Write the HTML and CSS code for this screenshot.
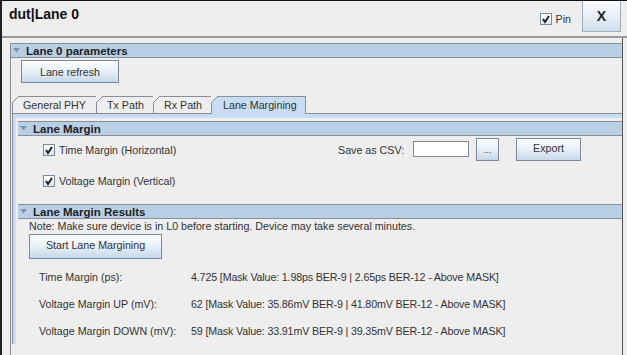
FILE: index.html
```html
<!DOCTYPE html>
<html lang="en">
<head>
  <meta charset="UTF-8" />
  <title>dut|Lane 0</title>
  <link rel="stylesheet" href="styles.css">
</head>
<body>
  <div class="window">

    <div class="titlebar">
      <span class="title">dut|Lane 0</span>
      <label class="pin">
        <span class="check"><svg width="10" height="10" viewBox="0 0 10 10"><polyline points="2,5 4,8 8,2" /></svg></span>
        Pin
      </label>
      <button class="close">X</button>
    </div>

    <div class="body">
      <div class="section">
        <div class="section-head">
          <svg class="tri" width="7" height="5" viewBox="0 0 7 5"><polygon points="0,0 7,0 3.5,4.5" /></svg>
          Lane 0 parameters
        </div>

        <div class="section-content">
          <button class="btn refresh">Lane refresh</button>

          <div class="tabs">
            <div class="tab tab-phy">General PHY</div>
            <div class="tab tab-tx">Tx Path</div>
            <div class="tab tab-rx">Rx Path</div>
            <div class="tab tab-lm selected">Lane Margining</div>
          </div>

          <div class="tab-pane">
            <div class="pane-inner">

              <div class="sub-head">
                <svg class="tri" width="7" height="5" viewBox="0 0 7 5"><polygon points="0,0 7,0 3.5,4.5" /></svg>
                Lane Margin
              </div>

              <div class="opt-row">
                <label class="opt">
                  <span class="check"><svg width="10" height="10" viewBox="0 0 10 10"><polyline points="2,5 4,8 8,2" /></svg></span>
                  Time Margin (Horizontal)
                </label>
                <span class="csv-label">Save as CSV:</span>
                <span class="field"></span>
                <button class="btn dots">...</button>
                <button class="btn export">Export</button>
              </div>

              <div class="opt-row second">
                <label class="opt">
                  <span class="check"><svg width="10" height="10" viewBox="0 0 10 10"><polyline points="2,5 4,8 8,2" /></svg></span>
                  Voltage Margin (Vertical)
                </label>
              </div>

              <div class="sub-head results-head">
                <svg class="tri" width="7" height="5" viewBox="0 0 7 5"><polygon points="0,0 7,0 3.5,4.5" /></svg>
                Lane Margin Results
              </div>

              <div class="results">
                <p class="note">Note: Make sure device is in L0 before starting. Device may take several minutes.</p>
                <button class="btn start">Start Lane Margining</button>

                <div class="result-grid">
                  <span>Time Margin (ps):</span>
                  <span class="value">4.725 [Mask Value: 1.98ps BER-9 | 2.65ps BER-12 - Above MASK]</span>
                  <span>Voltage Margin UP (mV):</span>
                  <span class="value">62 [Mask Value: 35.86mV BER-9 | 41.80mV BER-12 - Above MASK]</span>
                  <span>Voltage Margin DOWN (mV):</span>
                  <span class="value">59 [Mask Value: 33.91mV BER-9 | 39.35mV BER-12 - Above MASK]</span>
                </div>
              </div>

            </div>
          </div>
        </div>
      </div>
    </div>

  </div>
</body>
</html>
```

FILE: styles.css
```css
* {
  box-sizing: border-box;
}

html, body {
  margin: 0;
}

body {
  width: 627px;
  height: 355px;
  overflow: hidden;
  background-color: #eeeeee;
  color: #333333;
  font-family: 'Liberation Sans', Arial, sans-serif;
  font-size: 10.7px;
}

button {
  font-family: inherit;
  font-size: 10.7px;
  color: #333333;
  padding: 0;
  cursor: pointer;
}

.window {
  height: 355px;
  border-top: 1px solid #111111;
  border-left: 2px solid #222222;
  display: flex;
  flex-direction: column;
}

/* title bar */

.titlebar {
  height: 37px;
  flex: none;
  display: flex;
  align-items: flex-start;
  border-bottom: 2px solid #9a9a9a;
}

.title {
  margin: 5px 0 0 7px;
  font-size: 14px;
  font-weight: bold;
  line-height: 17px;
  color: #111111;
}

.pin {
  margin: 11px 11px 0 auto;
  display: flex;
  align-items: center;
  gap: 4px;
  height: 13px;
}

.close {
  width: 39px;
  height: 31px;
  margin-right: 6px;
  border: 1px solid #a3adb8;
  border-top: none;
  background: linear-gradient(#fdfeff, #e9f0f7 45%, #cfdeed);
  font-size: 14px;
  font-weight: bold;
  color: #222222;
}

/* check boxes */

.check {
  width: 12px;
  height: 12px;
  border: 1px solid #7a8a99;
  background: linear-gradient(#ffffff, #dde6ef);
  display: inline-flex;
  align-items: center;
  justify-content: center;
}

.check polyline {
  fill: none;
  stroke: #222222;
  stroke-width: 2;
}

/* body */

.body {
  flex: 1;
  width: 621px;
  padding: 5px 0 0 8px;
  border-right: 1px solid #555555;
  overflow: hidden;
}

.section {
  height: 100%;
  border-left: 1px solid #8e8e8e;
}

.section-head,
.sub-head {
  height: 15px;
  display: flex;
  align-items: center;
  padding-left: 2px;
  background-color: #b8cfe5;
  border-top: 1px solid #8a8f96;
  border-bottom: 1px solid #8a8f96;
  font-size: 11.5px;
  font-weight: bold;
  color: #222222;
}

.tri {
  margin-right: 6px;
  fill: #8494a6;
}

.btn {
  border: 1px solid #7a8a99;
  background: linear-gradient(#fdfeff, #eaf1f8 45%, #c6d8ea);
}

.refresh {
  width: 98px;
  height: 23px;
  margin: 2px 0 0 10px;
}

/* tabs */

.tabs {
  display: flex;
  margin: 13px 0 0 1px;
  height: 17px;
}

.tab {
  position: relative;
  height: 17px;
  padding: 2px 0 0 10px;
  border-left: 1px solid #8a8f96;
  border-top: 1px solid #8a8f96;
}

.tab::before {
  content: '';
  position: absolute;
  left: -1px;
  top: -1px;
  width: 7px;
  height: 7px;
  background: linear-gradient(135deg, #eeeeee 0 44%, #8a8f96 44% 56%, transparent 56%);
}

.tab-phy { width: 84px; }
.tab-tx { width: 57px; }
.tab-rx { width: 58px; }

.tab-lm {
  width: 95px;
  padding-left: 11px;
  border-right: 1px solid #8a8f96;
}

.tab.selected {
  background-color: #c8ddf2;
  height: 18px;
  margin-bottom: -1px;
}

.tab-pane {
  margin-left: 1px;
  height: 100%;
  border-top: 1px solid #8a8f96;
  border-left: 1px solid #8a8f96;
}

.pane-inner {
  height: 100%;
  border-top: 4px solid #c8ddf2;
  border-left: 3px solid #c8ddf2;
  padding: 3px 0 0 2px;
}

/* lane margin options */

.opt-row {
  height: 23px;
  margin-top: 2px;
  display: flex;
  align-items: center;
  padding-left: 25px;
}

.opt-row.second {
  margin-top: 8px;
}

.opt {
  width: 295px;
  display: flex;
  align-items: center;
  gap: 4px;
}

.csv-label {
  width: 75px;
}

.field {
  width: 56px;
  height: 16px;
  margin-top: -1px;
  background-color: #ffffff;
  border: 1px solid #7a8a99;
}

.dots {
  width: 23px;
  height: 23px;
  margin-left: 7px;
  font-size: 9px;
}

.export {
  width: 65px;
  height: 23px;
  margin-left: 17px;
  padding-bottom: 3px;
}

.results-head {
  margin-top: 12px;
}

/* results */

.results {
  padding-left: 11px;
}

.note {
  margin: 0;
  line-height: 14px;
}

.start {
  width: 133px;
  height: 25px;
  margin-top: 1px;
  padding-bottom: 3px;
}

.result-grid {
  display: grid;
  grid-template-columns: 152px auto;
  grid-auto-rows: 27px;
  align-items: center;
  margin: 4px 0 0 10px;
}

.value {
  letter-spacing: -0.15px;
}
```
